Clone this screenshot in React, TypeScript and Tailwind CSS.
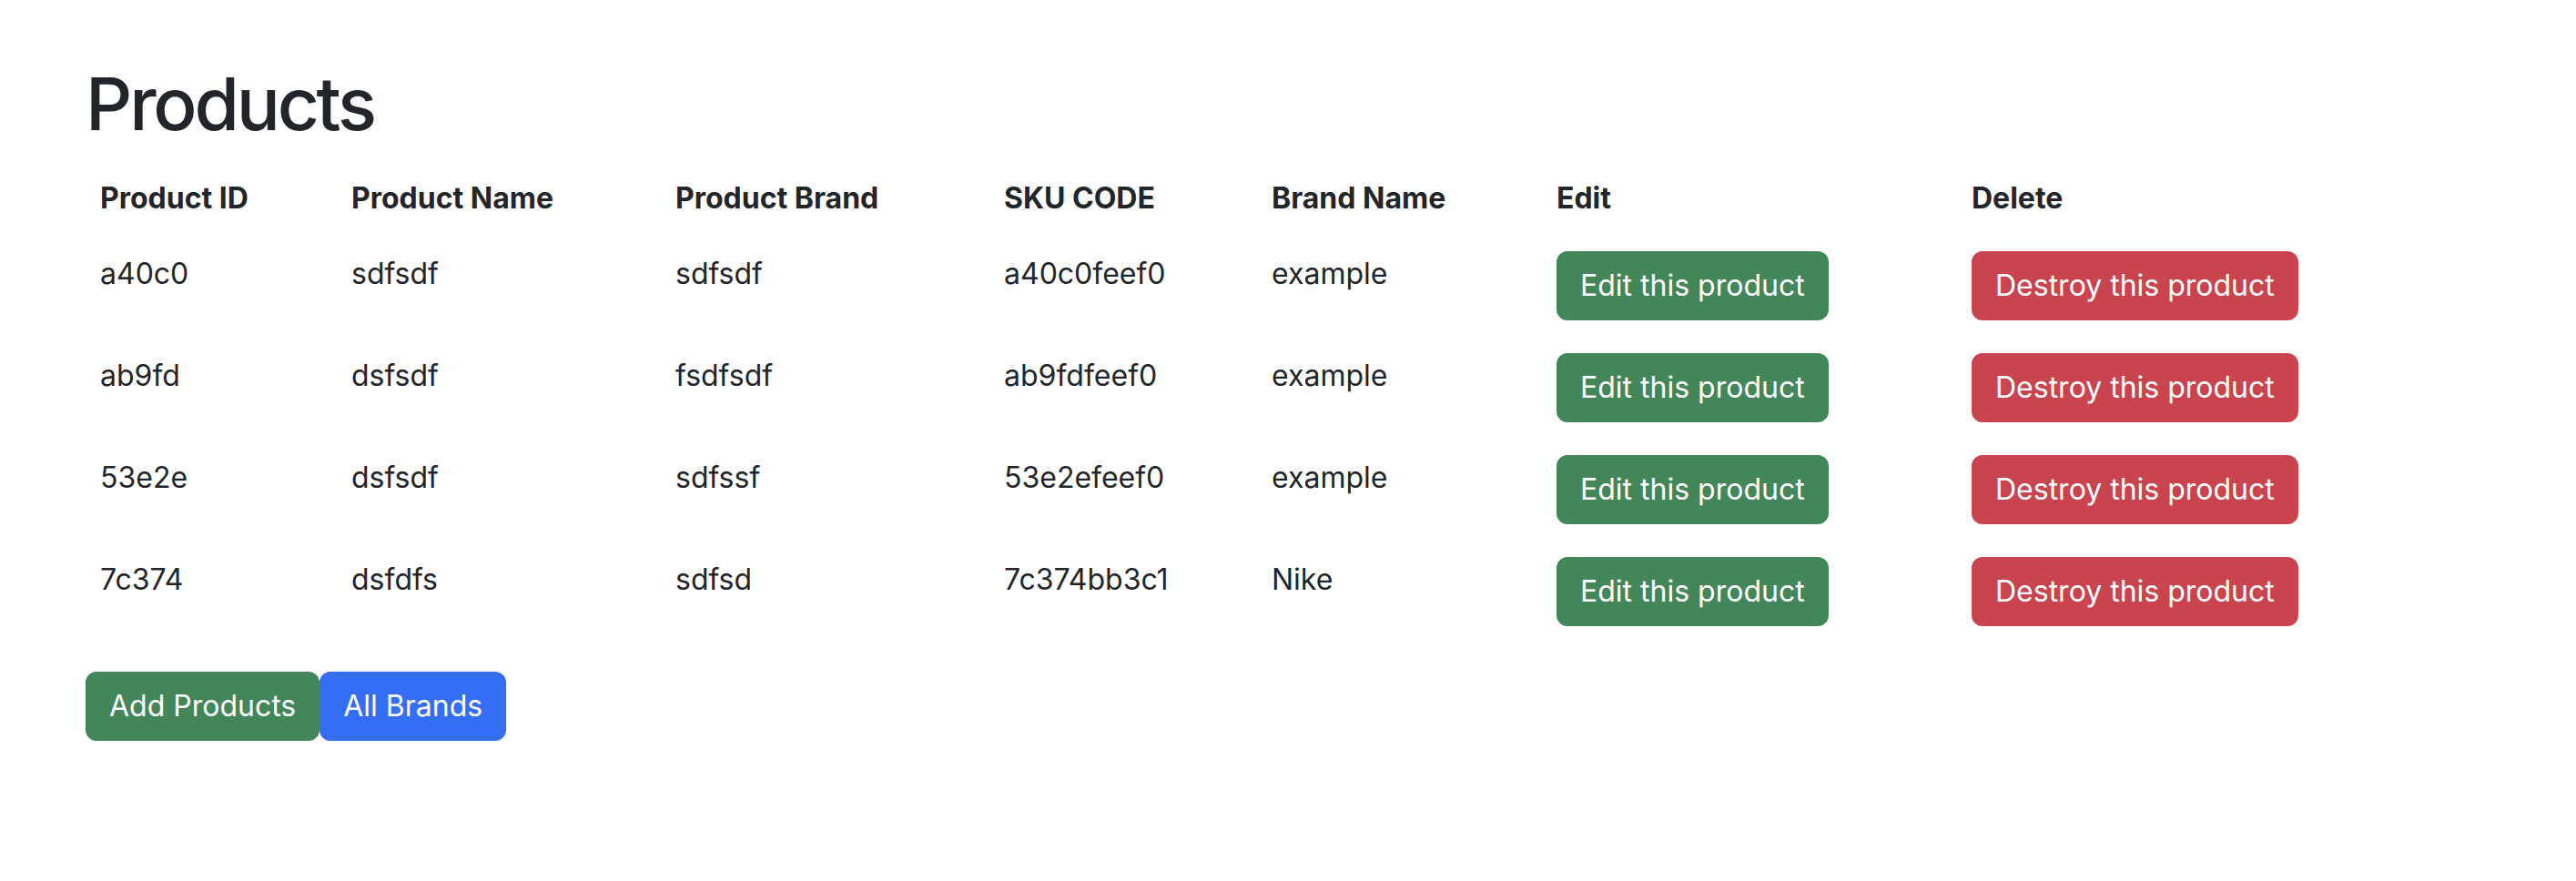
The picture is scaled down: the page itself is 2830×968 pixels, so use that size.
const COLUMNS = [
  { label: "Product ID", width: "w-[276px]" },
  { label: "Product Name", width: "w-[356px]" },
  { label: "Product Brand", width: "w-[361px]" },
  { label: "SKU CODE", width: "w-[294px]" },
  { label: "Brand Name", width: "w-[313px]" },
  { label: "Edit", width: "w-[456px]" },
  { label: "Delete", width: "" },
];

const PRODUCTS = [
  { id: "a40c0", name: "sdfsdf", brand: "sdfsdf", sku: "a40c0feef0", brandName: "example" },
  { id: "ab9fd", name: "dsfsdf", brand: "fsdfsdf", sku: "ab9fdfeef0", brandName: "example" },
  { id: "53e2e", name: "dsfsdf", brand: "sdfssf", sku: "53e2efeef0", brandName: "example" },
  { id: "7c374", name: "dsfdfs", brand: "sdfsd", sku: "7c374bb3c1", brandName: "Nike" },
];

const btn =
  "inline-block rounded-[12px] border-2 px-[24px] py-[12px] text-[32px] leading-[48px] text-white";

export default function App() {
  return (
    <div className="min-h-screen bg-white px-[94px] pt-[66px] font-['Inter',sans-serif] text-[32px] leading-[48px] text-[#222529]">
      <h1 className="mb-[16px] text-[80px] font-medium leading-[96px] tracking-[-3.2px]">Products</h1>

      <table className="mb-[30px] w-full table-fixed border-collapse">
        <thead>
          <tr className="h-[82px]">
            {COLUMNS.map((col) => (
              <th key={col.label} className={`${col.width} px-[16px] py-[16px] text-left align-top font-bold`}>
                {col.label}
              </th>
            ))}
          </tr>
        </thead>
        <tbody>
          {PRODUCTS.map((p) => (
            <tr key={p.id} className="h-[112px]">
              <td className="px-[16px] pt-[17px] pb-[16px] align-top">{p.id}</td>
              <td className="px-[16px] pt-[17px] pb-[16px] align-top">{p.name}</td>
              <td className="px-[16px] pt-[17px] pb-[16px] align-top">{p.brand}</td>
              <td className="px-[16px] pt-[17px] pb-[16px] align-top">{p.sku}</td>
              <td className="px-[16px] pt-[17px] pb-[16px] align-top">{p.brandName}</td>
              <td className="p-[16px] align-top">
                <button type="button" className={`${btn} border-[#428659] bg-[#428659]`}>
                  Edit this product
                </button>
              </td>
              <td className="p-[16px] align-top">
                <button type="button" className={`${btn} border-[#c9444e] bg-[#c9444e]`}>
                  Destroy this product
                </button>
              </td>
            </tr>
          ))}
        </tbody>
      </table>

      <div className="flex">
        <button type="button" className={`${btn} border-[#428659] bg-[#428659]`}>
          Add Products
        </button>
        <button type="button" className={`${btn} border-[#346ef4] bg-[#346ef4]`}>
          All Brands
        </button>
      </div>
    </div>
  );
}
